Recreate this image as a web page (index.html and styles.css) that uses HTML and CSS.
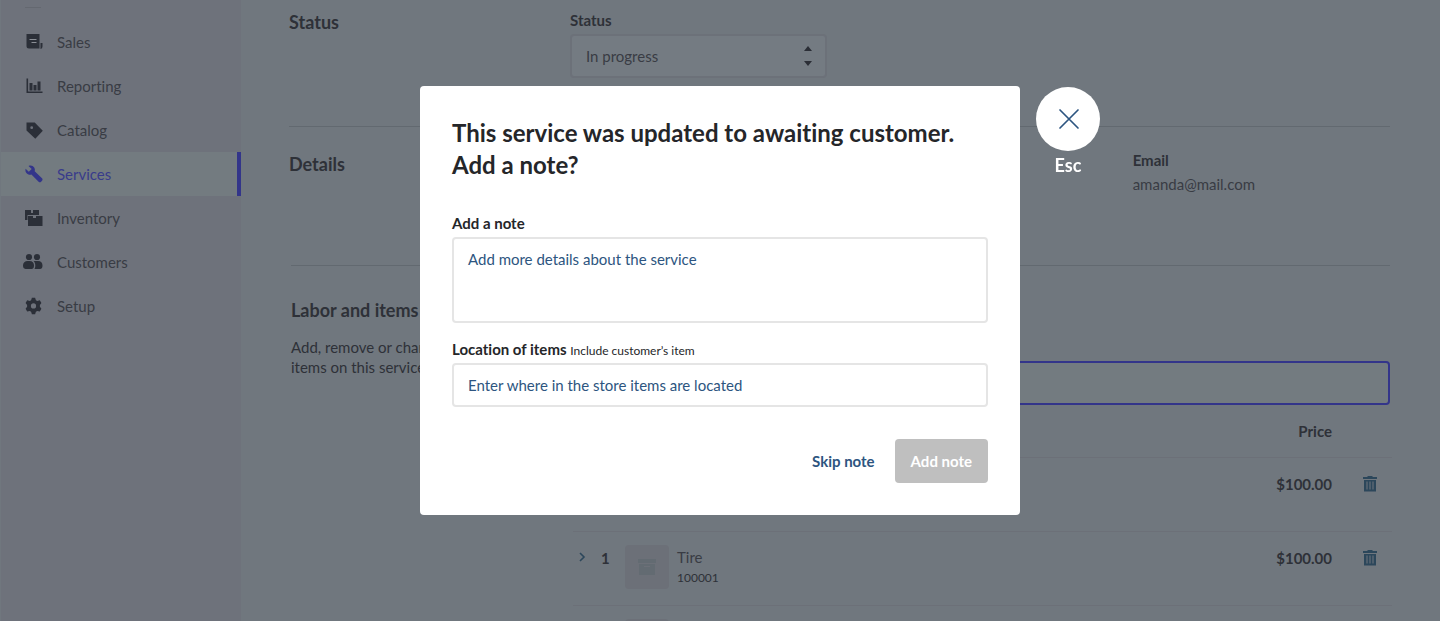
FILE: index.html
```html
<!DOCTYPE html>
<html lang="en">
<head>
<meta charset="utf-8">
<meta name="viewport" content="width=device-width, initial-scale=1">
<title>Services</title>
<link rel="stylesheet" href="styles.css">
</head>
<body>
<div class="app">
  <nav class="sidebar" aria-label="Main">
    <hr class="nav-rule">
    <a class="nav-link" href="#sales">
      <svg class="icon" viewBox="0 0 18 18" aria-hidden="true"><path d="M1.500 1h13v14.500H4a2.500 2.500 0 0 1-2.500-2.500z"/><path d="M15.500 10h2v3.500a2.500 2.500 0 0 1-2 2.500z"/><path class="cut" d="M4.500 6.500h7M6.500 9.500h5"/></svg>
      Sales</a>
    <a class="nav-link" href="#reporting">
      <svg class="icon" viewBox="0 0 18 18" aria-hidden="true"><path d="M1.500 1.500h1.600v12.900h14.400V16h-16zM4.500 6h3v7.500h-3zM8.500 8h3v5.500h-3zM12.500 4.500h3v9h-3z"/></svg>
      Reporting</a>
    <a class="nav-link" href="#catalog">
      <svg class="icon" viewBox="0 0 18 18" aria-hidden="true"><path fill-rule="evenodd" d="M1.500 1.500h8.200l8.100 8.300-7.500 8-8.800-8.400zm5.200 3.800a1.400 1.400 0 1 0 0 2.800 1.400 1.400 0 0 0 0-2.800z"/></svg>
      Catalog</a>
    <a class="nav-link active" href="#services" aria-current="page">
      <svg class="icon" viewBox="0 0 18 18" aria-hidden="true"><path d="M3.500.9C5.600-.1 8 .5 9.200 2.400c.7 1.200.9 2.500.5 3.800l7.300 7.100c.7.700.7 1.800 0 2.500l-.9.900c-.7.700-1.800.7-2.500 0L6.400 9.500C4.600 10 2.600 9.400 1.400 7.900.4 6.700.2 5.200.6 3.800l3.200 2.900 2.900-2.600z"/></svg>
      Services</a>
    <a class="nav-link" href="#inventory">
      <svg class="icon" viewBox="0 0 18 18" aria-hidden="true"><path d="M0 1h6v3h2V1h6v5H2.500v5H0zM3 7h5v2h3V7h6.500v10H3z"/></svg>
      Inventory</a>
    <a class="nav-link" href="#customers">
      <svg class="icon icon-wide" viewBox="0 0 20 18" aria-hidden="true"><circle cx="6" cy="4" r="3.100"/><circle cx="14" cy="4" r="3.100"/><path d="M0 12.500C0 9.500 2 8 4.500 8h2C9.500 8 11 10 11 12.500c0 2-.7 3.200-2 3.500H2.500C.7 15.700 0 14.500 0 12.500z"/><path d="M10.500 8h4.500c3 0 4.500 2 4.500 4.500 0 2-.7 3.500-2.500 3.500h-5.500c.5-1 .8-2 .8-3.500 0-2-.6-3.500-1.800-4.500z"/></svg>
      Customers</a>
    <a class="nav-link" href="#setup">
      <svg class="icon" viewBox="0 0 18 18" aria-hidden="true"><path fill-rule="evenodd" stroke-linejoin="round" d="M6.900.7h3.200l.8 2.500 1.400.8 2.500-.7 1.600 2.800-1.500 2v1.600l1.500 2-1.600 2.800-2.500-.6-1.400.8-.8 2.500H6.900l-.8-2.500-1.400-.8-2.500.6-1.600-2.800 1.500-2V8.100L.6 6.100l1.600-2.800 2.500.7 1.400-.8zM8.500 6.300a2.600 2.600 0 1 0 0 5.200 2.600 2.600 0 0 0 0-5.200z"/></svg>
      Setup</a>
  </nav>

  <main class="content">
    <section class="section section-status">
      <h2 class="section-title">Status</h2>
      <div class="fields">
        <div class="field">
          <label class="label" for="status">Status</label>
          <div class="select-wrap">
            <select class="select" id="status"><option>In progress</option></select>
            <svg class="select-arrows" viewBox="0 0 8 20" aria-hidden="true"><path d="M0 5l4-5 4 5zM0 15h8l-4 5z"/></svg>
          </div>
        </div>
      </div>
    </section>

    <section class="section section-details">
      <h2 class="section-title">Details</h2>
      <div class="fields">
        <dl class="fact">
          <dt class="label">Email</dt>
          <dd class="fact-value">amanda@mail.com</dd>
        </dl>
      </div>
    </section>

    <section class="section section-items">
      <div>
        <h2 class="section-title">Labor and items</h2>
        <p class="section-text">Add, remove or change<br>items on this service.</p>
      </div>
      <div>
        <input class="search" type="text" aria-label="Search items">
        <div class="items-wrap">
        <table class="items">
          <thead>
            <tr><th class="col-toggle"></th><th class="col-qty"></th><th></th><th class="price">Price</th><th class="col-remove"></th></tr>
          </thead>
          <tbody>
            <tr>
              <td></td><td></td><td></td>
              <td class="price">$100.00</td>
              <td class="remove"><button class="icon-button" type="button" aria-label="Remove item"><svg class="trash" viewBox="0 0 14 16" aria-hidden="true"><path fill-rule="evenodd" d="M0 1h4.500V0h5v1H14v2H0zM1 4h12v11.500H1zm2.500 1.500v8h1v-8zm3 0v8h1v-8zm3 0v8h1v-8z"/></svg></button></td>
            </tr>
            <tr>
              <td class="toggle"><button class="icon-button" type="button" aria-label="Expand item"><svg class="chevron" viewBox="0 0 8 10" aria-hidden="true"><path d="M2 1l4 4-4 4"/></svg></button></td>
              <td class="qty">1</td>
              <td class="item">
                <div class="product">
                  <span class="thumb"><svg class="box" viewBox="0 0 18 16" aria-hidden="true"><path fill-rule="evenodd" d="M0 0h18v4H0zM1 5h16v11H1zm5 2v1h6V7z"/></svg></span>
                  <div><div class="name">Tire</div><div class="sku">100001</div></div>
                </div>
              </td>
              <td class="price">$100.00</td>
              <td class="remove"><button class="icon-button" type="button" aria-label="Remove Tire"><svg class="trash" viewBox="0 0 14 16" aria-hidden="true"><path fill-rule="evenodd" d="M0 1h4.500V0h5v1H14v2H0zM1 4h12v11.500H1zm2.500 1.500v8h1v-8zm3 0v8h1v-8zm3 0v8h1v-8z"/></svg></button></td>
            </tr>
            <tr>
              <td></td><td></td><td class="item"><div class="product"><span class="thumb"></span></div></td><td></td><td></td>
            </tr>
          </tbody>
        </table>
        </div>
      </div>
    </section>
  </main>
</div>

<div class="overlay">
  <div class="modal" role="dialog" aria-modal="true" aria-labelledby="modal-title">
    <h1 class="modal-title" id="modal-title">This service was updated to awaiting customer. Add a note?</h1>
    <form class="form">
      <div class="field">
        <label class="label" for="note">Add a note</label>
        <textarea class="input note" id="note" placeholder="Add more details about the service"></textarea>
      </div>
      <div class="field">
        <label class="label" for="location">Location of items <span class="hint">Include customer’s item</span></label>
        <input class="input" id="location" type="text" placeholder="Enter where in the store items are located">
      </div>
      <div class="actions">
        <button class="button button-plain" type="button">Skip note</button>
        <button class="button button-main" type="submit" disabled>Add note</button>
      </div>
    </form>
    <button class="close" type="button">
      <span class="close-circle"><svg class="close-icon" viewBox="0 0 20 20" aria-hidden="true"><path d="M2 1l18 18M20 1L2 19"/></svg></span>
      Esc
    </button>
  </div>
</div>
</body>
</html>
```

FILE: styles.css
```css
* { box-sizing: border-box; }

body {
  margin: 0;
  height: 100vh;
  overflow: hidden;
  background: #70777e;
  color: #2e3138;
  font: 15px/20px Lato, sans-serif;
  font-variant-ligatures: none;
}

h1, h2, p, dl, dd { margin: 0; }

button, input, select, textarea { font: inherit; font-variant-ligatures: none; color: inherit; }

.app { display: flex; height: 100%; overflow: hidden; }

/* Sidebar */
.sidebar {
  flex: none;
  width: 241px;
  background: #6e727b;
  border-left: 1px solid #70777e;
}

.nav-rule {
  width: 16px;
  height: 1px;
  margin: 7px 0 12px 24px;
  border: 0;
  background: #646870;
}

.nav-link {
  display: flex;
  align-items: center;
  gap: 14px;
  height: 44px;
  padding-left: 24px;
  color: #393c44;
  text-decoration: none;
}

.icon { width: 18px; height: 18px; fill: #2b2f38; overflow: visible; }
.icon-wide { width: 20px; margin: 0 0 0 -2px; }
.cut { stroke: #8b8f96; fill: none; }

.nav-link.active {
  background: #737b80;
  border-right: 4px solid #33358a;
  color: #393b8b;
}
.nav-link.active .icon { fill: #33358a; }

/* Page content */
.content { flex: 1; min-width: 0; padding: 0 50px 0 48px; }

.section { display: grid; grid-template-columns: 281px 1fr; }
.section-status { height: 127px; padding-top: 10px; }
.section-details { height: 139px; padding-top: 23px; border-top: 1px solid #626970; margin-top: -1px; }
.section-details .section-title { padding-top: 2px; }
.section-items {
  grid-template-columns: 279px 1fr;
  margin-left: 2px;
  padding-top: 32px;
  border-top: 1px solid #626970;
}

.section-title { font-size: 18px; line-height: 24px; font-weight: 700; }
.section-text { margin-top: 15px; }

.fields { display: grid; grid-template-columns: repeat(3, 1fr); gap: 24px; align-items: start; }
.field { display: flex; flex-direction: column; gap: 4px; }
.label { font-weight: 700; }

.select-wrap { position: relative; }
.select {
  display: block;
  width: 100%;
  height: 44px;
  padding: 0 14px;
  border: 2px solid #6c7179;
  border-radius: 4px;
  background: #747b82;
  color: #393c44;
  appearance: none;
}
.select-arrows {
  position: absolute;
  top: 12px;
  right: 15px;
  width: 8px;
  height: 20px;
  fill: #2b2e36;
  pointer-events: none;
}

.fact { grid-column: 3; }
.fact-value { margin-top: 4px; color: #393c44; }

.search {
  display: block;
  width: 100%;
  height: 44px;
  margin-top: 63px;
  border: 2px solid #33358a;
  border-radius: 4px;
  background: #737b80;
}

/* Items table */
.items-wrap { margin: 0 -2px 0 3px; }
.items {
  width: 100%;
  border-spacing: 0;
  table-layout: fixed;
}
.items th, .items td { padding: 0; vertical-align: top; border-bottom: 1px solid #6c7078; }
.items th { height: 53px; padding-top: 16px; }
.items td { height: 74px; padding-top: 16px; }
.items .item { padding-top: 13px; }
.col-toggle { width: 28px; }
.col-qty { width: 24px; }
.col-remove { width: 60px; }
.items .price { text-align: right; font-weight: 700; }
.items .toggle { padding: 15px 0 0 5px; }
.qty { font-weight: 700; }

.product { display: flex; gap: 8px; }
.thumb {
  display: flex;
  align-items: center;
  justify-content: center;
  width: 44px;
  height: 44px;
  border-radius: 4px;
  background: #6c7078;
}
.name { line-height: 24px; color: #393c44; }
.sku { font-size: 12px; line-height: 18px; }
.box { width: 18px; height: 16px; fill: #636b72; }

.icon-button { display: flex; height: 20px; padding: 0; border: 0; background: none; align-items: center; }
.remove .icon-button { margin-left: 31px; }
.trash { width: 14px; height: 16px; fill: #2c475b; }
.chevron { width: 8px; height: 10px; fill: none; stroke: #2c475b; stroke-width: 1.600; }

/* Dialog */
.overlay {
  position: fixed;
  inset: 0;
  display: flex;
  justify-content: center;
  align-items: flex-start;
  padding-top: 86px;
}
.modal {
  position: relative;
  width: 600px;
  max-width: 100%;
  padding: 31px 32px 32px;
  border-radius: 4px;
  background: #fff;
  color: #252629;
}
.modal-title { font-size: 24px; line-height: 32px; font-weight: 700; }
.form { display: flex; flex-direction: column; gap: 16px; margin-top: 32px; }
.hint { font-size: 12px; line-height: 16px; font-weight: 400; }
.form .label { height: 20px; }

.input {
  display: block;
  width: 100%;
  height: 44px;
  padding: 0 14px;
  border: 2px solid #e5e5e5;
  border-radius: 4px;
  background: #fff;
}
.note { height: 86px; padding: 10px 14px; resize: none; }
.input::placeholder { color: #2d5580; opacity: 1; }

.actions { display: flex; justify-content: flex-end; gap: 4px; margin-top: 16px; }
.button {
  height: 44px;
  padding: 0 16px;
  border: 0;
  border-radius: 4px;
  font-weight: 700;
}
.button-plain { background: none; color: #2d5580; }
.button-main { background: #bfbfbf; color: #fff; }

.close {
  position: absolute;
  top: 1px;
  left: calc(100% + 16px);
  display: flex;
  flex-direction: column;
  align-items: center;
  gap: 2px;
  padding: 0;
  border: 0;
  background: none;
  color: #fff;
  font-size: 18px;
  line-height: 24px;
  font-weight: 700;
}
.close-circle {
  display: flex;
  align-items: center;
  justify-content: center;
  width: 64px;
  height: 64px;
  border-radius: 50%;
  background: #fff;
}
.close-icon { width: 20px; height: 20px; fill: none; stroke: #2d5580; stroke-width: 1.700; stroke-linecap: round; overflow: visible; }
```
